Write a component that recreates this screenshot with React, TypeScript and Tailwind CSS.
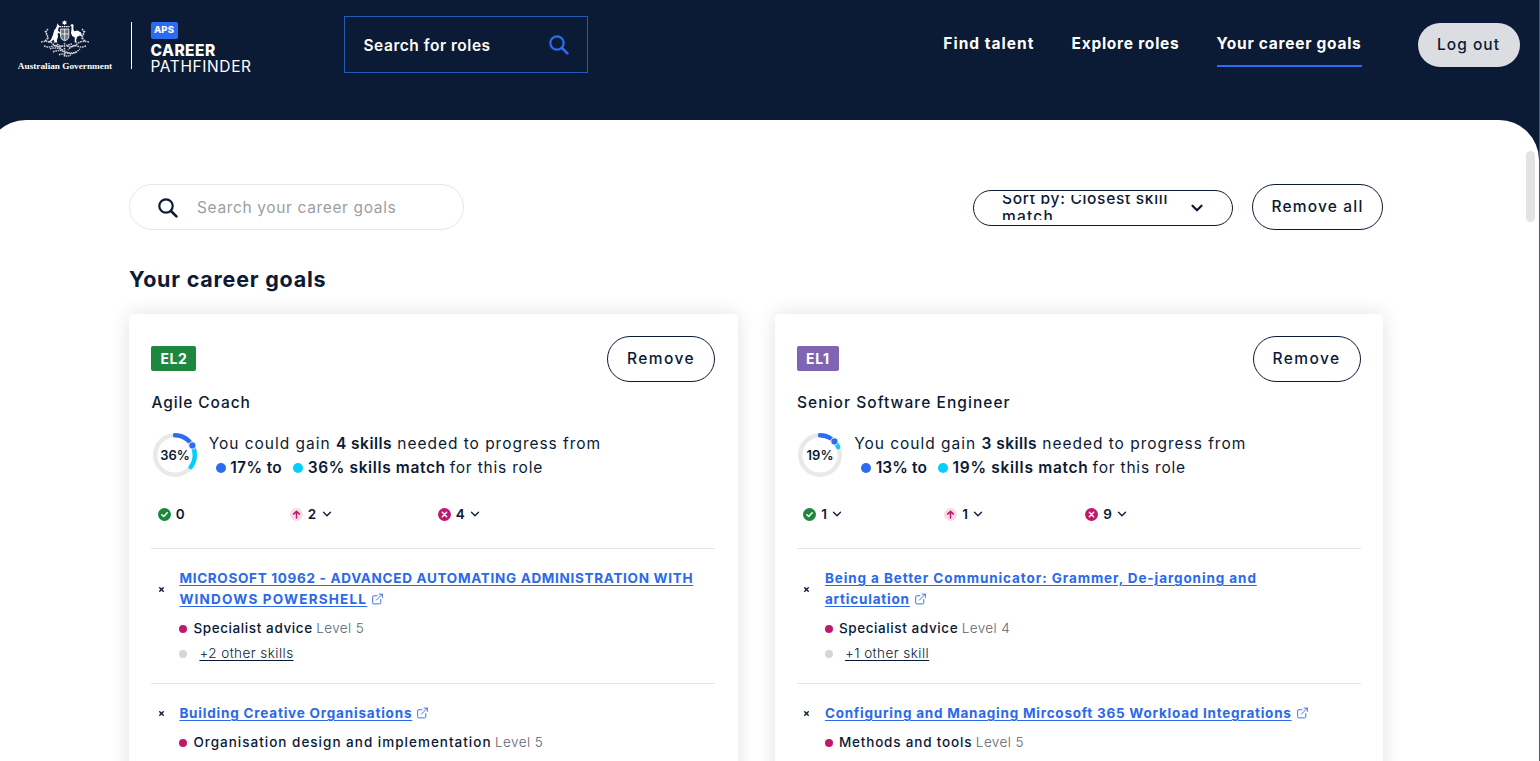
import type { ReactNode } from "react";
import { ChevronDown, ExternalLink } from "lucide-react";

type Course = {
  title: ReactNode;
  skill: string;
  skillClass: string;
  level: string;
  more?: string;
};

type Goal = {
  grade: string;
  gradeClass: string;
  role: string;
  roleClass: string;
  from: number;
  to: number;
  fromClass: string;
  toClass: string;
  gain: string;
  counts: { value: number; open: boolean; className: string }[];
  courses: Course[];
};

const goals: Goal[] = [
  {
    grade: "EL2",
    gradeClass: "w-[45px] bg-[#1b873f] tracking-[0.55px]",
    role: "Agile Coach",
    roleClass: "tracking-[0.9px]",
    from: 17,
    to: 36,
    fromClass: "tracking-[0.38px]",
    toClass: "tracking-[0.63px]",
    gain: "4 skills",
    counts: [
      { value: 0, open: false, className: "w-[132px]" },
      { value: 2, open: true, className: "w-[148px]" },
      { value: 4, open: true, className: "" },
    ],
    courses: [
      {
        title: (
          <>
            <span className="tracking-[0.69px]">
              MICROSOFT 10962 - ADVANCED AUTOMATING ADMINISTRATION WITH
            </span>
            <br />
            <span className="tracking-[1.2px]">WINDOWS POWERSHELL</span>
          </>
        ),
        skill: "Specialist advice",
        skillClass: "tracking-[0.6px]",
        level: "Level 5",
        more: "+2 other skills",
      },
      {
        title: <span className="tracking-[0.8px]">Building Creative Organisations</span>,
        skill: "Organisation design and implementation",
        skillClass: "tracking-[1px]",
        level: "Level 5",
        more: "+2 other skills",
      },
    ],
  },
  {
    grade: "EL1",
    gradeClass: "w-[42px] bg-[#7e64b3] tracking-[0.65px]",
    role: "Senior Software Engineer",
    roleClass: "tracking-[1.06px]",
    from: 13,
    to: 19,
    fromClass: "tracking-[0.1px]",
    toClass: "tracking-[0.72px]",
    gain: "3 skills",
    counts: [
      { value: 1, open: true, className: "w-[141px]" },
      { value: 1, open: true, className: "w-[141px]" },
      { value: 9, open: true, className: "" },
    ],
    courses: [
      {
        title: (
          <>
            <span className="tracking-[0.91px]">
              Being a Better Communicator: Grammer, De-jargoning and
            </span>
            <br />
            <span className="tracking-[0.8px]">articulation</span>
          </>
        ),
        skill: "Specialist advice",
        skillClass: "tracking-[0.6px]",
        level: "Level 4",
        more: "+1 other skill",
      },
      {
        title: (
          <span className="tracking-[0.76px]">
            Configuring and Managing Mircosoft 365 Workload Integrations
          </span>
        ),
        skill: "Methods and tools",
        skillClass: "tracking-[0.82px]",
        level: "Level 5",
      },
    ],
  },
];

function SearchIcon({ className }: { className: string }) {
  return (
    <svg viewBox="0 0 20 20" className={className} fill="none" stroke="currentColor" strokeLinecap="round">
      <circle cx="8" cy="8" r="6.7" strokeWidth="2.2" />
      <path d="M13 13l5.4 5.4" strokeWidth="2.6" />
    </svg>
  );
}

function CoatOfArms() {
  return (
    <svg viewBox="0 0 50 38" className="h-[38px] w-[50px]" fill="#fff" stroke="none">
      <path d="M24.5 0l.7 1.6 1.8-.3-1 1.4 1 1.5-1.8-.3-.7 1.5-.7-1.5-1.8.3 1-1.5-1-1.4 1.8.3z" />
      <path d="M19.5 6.6h10" stroke="#fff" strokeWidth="1.4" strokeDasharray="1.6 .6" />
      <path d="M17.6 3.2l.9 1.8 1.5 1.5-1.6 1.5-.3 3 2.4 1.4-.5 1-2.3-.4.3 4-1.200 3.200.4 2.200h-3.900l1.100-1-.9-2-2 2-4 1.600 3.400-3.200 2-4.600 1.200-4.600 2.100-2.900z" />
      <path d="M30.200 5.200l1.900-1.200 1.500 1-.3 4 1 2.300 3.200-.7 3.500 2 1.200 3.800-2.400-.9-2.800 1.600-.9 3.200.8 2.300h-2.200l.1-5-2.600-1.700-1.200-3 .5-4.200-.1-2.400z" />
      <path d="M20.500 9h8.400v7.500q-.3 3-4.200 4.500-3.900-1.500-4.200-4.500z" fillOpacity=".4" />
      <path
        d="M20.500 9h8.400v7.500q-.3 3-4.200 4.500-3.900-1.500-4.200-4.500zM24.700 9v11M20.500 14h8.400"
        fill="none"
        stroke="#fff"
        strokeWidth=".8"
      />
      <g fill="none" stroke="#fff" strokeWidth="1.500" strokeDasharray="1.600 .8" opacity=".8">
        <path d="M8 9q-3 3-1 6t-2 6M5 11q3 4 3 9M1 22q8-2 12 2t10 2M4 26q5 2 9 0t9 4" />
        <path d="M42 9q3 3 1 6t2 6M45 11q-3 4-3 9M49 22q-8-2-12 2t-10 2M46 26q-5 2-9 0t-9 4" />
        <path d="M10 29q6-3 14.500 2t15.500-2M13 32q6-3 11.500 0t12.500 0M19 35q3-2 5.500 0t6.500 0M24.500 23v14M17 24q4 3 7.500 2t7.500-2" />
      </g>
    </svg>
  );
}

function MatchRing({ from, to }: { from: number; to: number }) {
  const angle = (from / 100) * 2 * Math.PI;
  const ring = { cx: 22, cy: 22, r: 19.8, pathLength: 100, fill: "none", strokeWidth: 4.4 };
  return (
    <svg viewBox="0 0 44 44" className="mt-[1.5px] size-[44px] shrink-0 overflow-visible">
      <circle {...ring} stroke="#e8eaea" />
      <g transform="rotate(-90 22 22)" strokeLinecap="round">
        <circle {...ring} stroke="#00cfff" strokeDasharray={`${to - from - 2} 100`} strokeDashoffset={-from - 1.5} />
        <circle {...ring} stroke="#2b6cf0" strokeDasharray={`${from - 4} 100`} />
      </g>
      <circle
        cx={22 + 19.8 * Math.sin(angle)}
        cy={22 - 19.8 * Math.cos(angle)}
        r="3.6"
        fill="#2b6cf0"
        stroke="#fff"
        strokeWidth=".8"
      />
      <text x="22" y="26.5" textAnchor="middle" fontSize="13" fontWeight="600" fill="#0b1a35">
        {to}%
      </text>
    </svg>
  );
}

function CountIcon({ kind }: { kind: number }) {
  return (
    <svg viewBox="0 0 13 13" className="size-[13px]" fill="none" strokeLinecap="round" strokeLinejoin="round">
      {kind === 0 && (
        <>
          <circle cx="6.5" cy="6.5" r="6.5" fill="#1b873f" />
          <path d="M3.8 6.7l1.9 1.8 3.5-3.7" stroke="#fff" strokeWidth="1.5" />
        </>
      )}
      {kind === 1 && (
        <>
          <circle cx="6.5" cy="6.5" r="6.5" fill="#f8dbe8" />
          <path d="M6.5 10V3.5M3.6 6.1l2.9-2.8 2.9 2.8" stroke="#c2186b" strokeWidth="1.5" />
        </>
      )}
      {kind === 2 && (
        <>
          <circle cx="6.5" cy="6.5" r="6.5" fill="#c2186b" />
          <path d="M4.3 4.3l4.4 4.4M8.7 4.3l-4.4 4.4" stroke="#fff" strokeWidth="1.4" />
        </>
      )}
    </svg>
  );
}

function PillButton({ children, className }: { children: ReactNode; className: string }) {
  return (
    <button
      className={`flex h-[46px] items-center justify-center rounded-full border border-[#0b1a35] pb-px font-medium ${className}`}
    >
      {children}
    </button>
  );
}

function CourseItem({ course }: { course: Course }) {
  return (
    <li className="border-t border-[#e4e5e7] pt-[19px] pb-[17px] text-[13.5px]">
      <div className="flex items-center">
        <svg viewBox="0 0 5 5" className="mr-[15.5px] ml-[7.5px] size-[5px] shrink-0" stroke="#0b1a35" strokeWidth="1.4">
          <path d="M.3.3l4.4 4.4M4.7.3L.3 4.7" />
        </svg>
        <p className="leading-[21px] font-bold whitespace-nowrap text-[#2b69ea]">
          <a className="underline decoration-1 underline-offset-2">{course.title}</a>
          <ExternalLink className="ml-[4px] inline size-[13px] -translate-y-[1.5px]" strokeWidth={1.7} />
        </p>
      </div>
      <div className="mt-[6px] ml-[28px] flex h-[25px] items-center whitespace-nowrap">
        <span className="mr-[6px] size-[8px] rounded-full bg-[#c2186b]" />
        <span className={`font-medium ${course.skillClass}`}>{course.skill}</span>
        <span className="ml-[3.5px] font-light tracking-[0.4px] text-[#5c6470]">{course.level}</span>
      </div>
      {course.more && (
        <div className="ml-[28px] flex h-[25px] items-center">
          <span className="mr-[12px] size-[8px] rounded-full bg-[#d5d6d8]" />
          <a className="font-light tracking-[0.45px] underline decoration-1 underline-offset-2">{course.more}</a>
        </div>
      )}
    </li>
  );
}

function GoalCard({ goal }: { goal: Goal }) {
  return (
    <article className="w-[608.5px] rounded-[4px] bg-white pt-[22px] pr-[22.5px] pl-[22.4px] shadow-[0_0_20px_rgba(0,0,0,0.12)]">
      <div className="flex items-center justify-between">
        <span
          className={`mb-px flex h-[25px] items-center justify-center rounded-[2px] text-[14px] font-bold text-white ${goal.gradeClass}`}
        >
          {goal.grade}
        </span>
        <PillButton className="w-[108px] tracking-[1.42px]">Remove</PillButton>
      </div>
      <h2 className={`mt-[9px] leading-[24px] font-medium ${goal.roleClass}`}>{goal.role}</h2>
      <div className="mt-[16.5px] flex gap-[12px] pl-[1.3px]">
        <MatchRing from={goal.from} to={goal.to} />
        <div className="leading-[24px] whitespace-nowrap">
          <p>
            <span className="tracking-[0.98px]">You could gain </span>
            <span className="font-semibold tracking-[0.47px]">{goal.gain}</span>
            <span className="tracking-[0.97px]"> needed to progress from</span>
          </p>
          <p className="flex items-center pl-[7px]">
            <span className="mt-px mr-[4.5px] size-[10px] rounded-full bg-[#2b6cf0]" />
            <span className={`font-semibold ${goal.fromClass}`}>{goal.from}% to</span>
            <span className="mt-px mr-[4.5px] ml-[11px] size-[10px] rounded-full bg-[#00cfff]" />
            <span className={`font-semibold ${goal.toClass}`}>{goal.to}% skills match</span>
            <span className="ml-[4px] tracking-[0.8px]">for this role</span>
          </p>
        </div>
      </div>
      <div className="mt-[24.5px] mb-[24px] flex h-[20px] items-center pl-[6.3px] text-[13.5px] font-semibold">
        {goal.counts.map((count, i) => (
          <div key={i} className={`flex items-center ${count.className}`}>
            <CountIcon kind={i} />
            <span className="ml-[5px]">{count.value}</span>
            {count.open && <ChevronDown className="ml-[3.5px] size-[14px]" strokeWidth={2.2} />}
          </div>
        ))}
      </div>
      <ul>
        {goal.courses.map((course, i) => (
          <CourseItem key={i} course={course} />
        ))}
      </ul>
    </article>
  );
}

export default function App() {
  return (
    <div className="relative h-[761px] w-[1540px] overflow-hidden border-r border-[#3b5a93] bg-[#0b1a35] font-['Inter',sans-serif] text-[15.5px] text-[#0b1a35]">
      <header className="flex h-[120px] items-start text-white">
        <div className="mt-[20px] ml-[17px] flex w-[96px] flex-col items-center">
          <CoatOfArms />
          <span className="mt-[2px] font-['Liberation_Serif',serif] text-[9.25px] leading-[13px] font-bold whitespace-nowrap">
            Australian Government
          </span>
        </div>
        <div className="mt-[22px] ml-[18px] h-[47px] w-px bg-white" />
        <div className="mt-[22px] ml-[18.5px] w-[104px]">
          <span className="flex h-[17px] w-[27px] items-center justify-center rounded-[2px] bg-[#2b6cf0] text-[9.5px] font-extrabold tracking-[0.1px]">
            APS
          </span>
          <div className="mt-[4px] leading-[16px] font-extrabold tracking-[0.45px]">CAREER</div>
          <div className="leading-[16px] tracking-[0.6px]">PATHFINDER</div>
        </div>
        <div className="mt-[16px] ml-[89.5px] flex h-[57px] w-[243.5px] items-center justify-between border border-[#2459b8] pr-[18px] pl-[18.5px]">
          <span className="mt-[2px] font-semibold tracking-[0.53px]">Search for roles</span>
          <SearchIcon className="mt-px size-[20px] text-[#2b6cf0]" />
        </div>
        <nav className="mt-[32px] ml-auto flex gap-[37px] leading-[24px] font-bold whitespace-nowrap">
          <a className="tracking-[1.02px]">Find talent</a>
          <a className="tracking-[0.75px]">Explore roles</a>
          <a className="border-b-2 border-[#2b6cf0] pb-[9px] tracking-[0.72px]">Your career goals</a>
        </nav>
        <button className="mt-[23px] mr-[19.5px] ml-[56px] h-[44px] w-[102px] rounded-full bg-[#dcdde0] pb-px font-medium tracking-[1.02px] text-[#0b1a35]">
          Log out
        </button>
      </header>
      <main className="-ml-[14px] h-[641px] rounded-t-[40px] bg-white pt-[64px] pl-[143px]">
        <div className="flex w-[1254px] items-center">
          <div className="flex h-[46px] w-[334.5px] items-center rounded-full border border-[#e6e7e9] pl-[27.5px]">
            <SearchIcon className="mt-px size-[20px]" />
            <span className="mt-[2px] ml-[19.5px] tracking-[0.64px] text-[#9b9ea3]">Search your career goals</span>
          </div>
          <div className="mt-px ml-auto flex h-[36px] w-[260px] items-center rounded-full border border-[#0b1a35] pl-[28px] font-medium">
            <div className="flex h-[25px] w-[188px] items-center overflow-hidden">
              <span className="leading-[18px] tracking-[0.7px]">
                Sort by: Closest skill
                <br />
                <span className="tracking-[1.2px]">match</span>
              </span>
            </div>
            <ChevronDown className="mt-px size-[18px] -translate-x-[2px]" strokeWidth={3} />
          </div>
          <PillButton className="ml-[19px] w-[131px] tracking-[1.18px]">Remove all</PillButton>
        </div>
        <h1 className="mt-[35px] text-[21.5px] leading-[28px] font-bold tracking-[0.78px]">Your career goals</h1>
        <div className="mt-[21px] flex w-[1254px] justify-between">
          {goals.map((goal) => (
            <GoalCard key={goal.grade} goal={goal} />
          ))}
        </div>
      </main>
      <div className="absolute top-[151px] right-[4px] h-[71px] w-[9px] rounded-full bg-[#e3e3e3]" />
    </div>
  );
}
